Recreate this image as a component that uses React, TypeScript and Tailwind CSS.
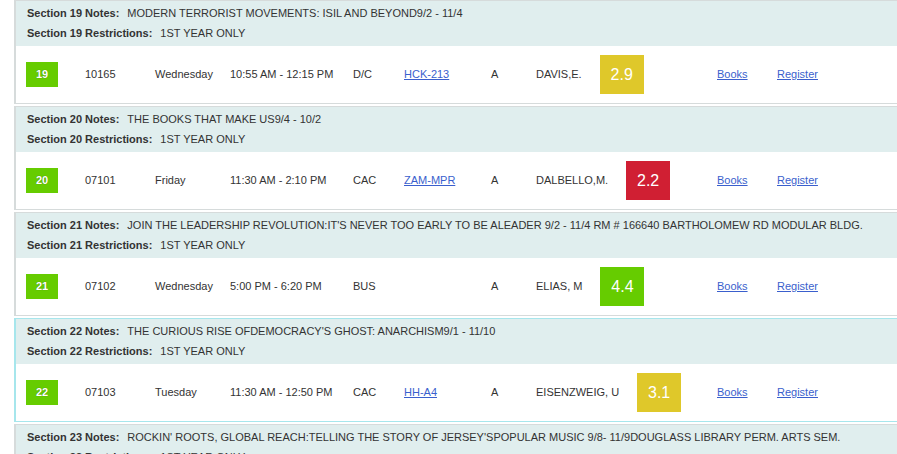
import React from 'react';

interface Section {
  num: string;
  notes: string;
  restrictions: string;
  index: string;
  day: string;
  time: string;
  campus: string;
  room: string;
  mode: string;
  instructor: string;
  rating: string;
  ratingColor: string;
  highlight?: boolean;
}

const sections: Section[] = [
  {
    num: '19',
    notes: 'MODERN TERRORIST MOVEMENTS: ISIL AND BEYOND9/2 - 11/4',
    restrictions: '1ST YEAR ONLY',
    index: '10165',
    day: 'Wednesday',
    time: '10:55 AM - 12:15 PM',
    campus: 'D/C',
    room: 'HCK-213',
    mode: 'A',
    instructor: 'DAVIS,E.',
    rating: '2.9',
    ratingColor: 'bg-[#dfc82a]',
  },
  {
    num: '20',
    notes: 'THE BOOKS THAT MAKE US9/4 - 10/2',
    restrictions: '1ST YEAR ONLY',
    index: '07101',
    day: 'Friday',
    time: '11:30 AM - 2:10 PM',
    campus: 'CAC',
    room: 'ZAM-MPR',
    mode: 'A',
    instructor: 'DALBELLO,M.',
    rating: '2.2',
    ratingColor: 'bg-[#d01f33]',
  },
  {
    num: '21',
    notes:
      "JOIN THE LEADERSHIP REVOLUTION:IT'S NEVER TOO EARLY TO BE ALEADER 9/2 - 11/4 RM # 166640 BARTHOLOMEW RD MODULAR BLDG.",
    restrictions: '1ST YEAR ONLY',
    index: '07102',
    day: 'Wednesday',
    time: '5:00 PM - 6:20 PM',
    campus: 'BUS',
    room: '',
    mode: 'A',
    instructor: 'ELIAS, M',
    rating: '4.4',
    ratingColor: 'bg-[#66cc00]',
  },
  {
    num: '22',
    notes: "THE CURIOUS RISE OFDEMOCRACY'S GHOST: ANARCHISM9/1 - 11/10",
    restrictions: '1ST YEAR ONLY',
    index: '07103',
    day: 'Tuesday',
    time: '11:30 AM - 12:50 PM',
    campus: 'CAC',
    room: 'HH-A4',
    mode: 'A',
    instructor: 'EISENZWEIG, U',
    rating: '3.1',
    ratingColor: 'bg-[#dfc82a]',
    highlight: true,
  },
];

function NotesBlock({ num, notes, restrictions }: { num: string; notes: string; restrictions: string }) {
  return (
    <div className="bg-[#e0eeee] pl-[11px] pt-[2px] pb-[3px] text-[11px] text-[#333] whitespace-nowrap">
      <div className="h-[20px] leading-[20px]">
        <span className="font-bold">Section {num} Notes:</span>
        <span className="ml-[8px]">{notes}</span>
      </div>
      <div className="h-[20px] leading-[20px]">
        <span className="font-bold">Section {num} Restrictions:</span>
        <span className="ml-[8px]">{restrictions}</span>
      </div>
    </div>
  );
}

function SectionBlock({ s }: { s: Section }) {
  const border = s.highlight ? 'border-[#a6e6ec]' : 'border-[#d6dbdb]';
  return (
    <div className={`border-t border-b border-l-2 ${border}`}>
      <NotesBlock num={s.num} notes={s.notes} restrictions={s.restrictions} />
      <div className="h-[57px] bg-white flex items-center text-[11px] text-[#333] whitespace-nowrap pl-[10px]">
        <div className="w-[59px]">
          <div className="w-[32px] h-[25px] bg-[#66cc00] text-white font-bold flex items-center justify-center [text-shadow:0_0_1px_rgba(0,0,0,0.4)]">
            {s.num}
          </div>
        </div>
        <div className="w-[70px]">{s.index}</div>
        <div className="w-[75px]">{s.day}</div>
        <div className="w-[123px]">{s.time}</div>
        <div className="w-[51px]">{s.campus}</div>
        <div className="w-[87px]">
          {s.room && <a className="text-[#3a5fcd] underline" href="#">{s.room}</a>}
        </div>
        <div className="w-[45px]">{s.mode}</div>
        <div className="w-[181px] flex items-center">
          <span>{s.instructor}</span>
          <div className={`ml-[18px] w-[44px] h-[39px] ${s.ratingColor} text-white text-[16px] flex items-center justify-center`}>
            {s.rating}
          </div>
        </div>
        <div className="w-[60px]">
          <a className="text-[#3a5fcd] underline" href="#">Books</a>
        </div>
        <div>
          <a className="text-[#3a5fcd] underline" href="#">Register</a>
        </div>
      </div>
    </div>
  );
}

export default function App() {
  return (
    <div className="w-[897px] h-[454px] overflow-hidden bg-white font-['Liberation_Sans',Arial,sans-serif]">
      <div className="ml-[14px] flex flex-col gap-[2px]">
        {sections.map((s) => (
          <SectionBlock key={s.num} s={s} />
        ))}
        <div className="border-t border-l-2 border-[#d6dbdb]">
          <NotesBlock
            num="23"
            notes="ROCKIN' ROOTS, GLOBAL REACH:TELLING THE STORY OF JERSEY'SPOPULAR MUSIC 9/8- 11/9DOUGLASS LIBRARY PERM. ARTS SEM."
            restrictions="1ST YEAR ONLY"
          />
        </div>
      </div>
    </div>
  );
}
